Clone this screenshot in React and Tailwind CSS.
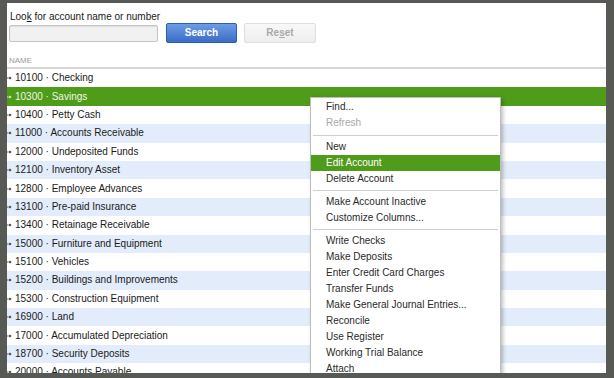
const accounts = [
    '10100 · Checking',
    '10300 · Savings',
    '10400 · Petty Cash',
    '11000 · Accounts Receivable',
    '12000 · Undeposited Funds',
    '12100 · Inventory Asset',
    '12800 · Employee Advances',
    '13100 · Pre-paid Insurance',
    '13400 · Retainage Receivable',
    '15000 · Furniture and Equipment',
    '15100 · Vehicles',
    '15200 · Buildings and Improvements',
    '15300 · Construction Equipment',
    '16900 · Land',
    '17000 · Accumulated Depreciation',
    '18700 · Security Deposits',
    '20000 · Accounts Payable',
];

const menu = [
    { label: 'Find...' },
    { label: 'Refresh', disabled: true },
    { sep: 'h-[8px]' },
    { label: 'New' },
    { label: 'Edit Account', active: true },
    { label: 'Delete Account' },
    { sep: 'h-[7px]' },
    { label: 'Make Account Inactive' },
    { label: 'Customize Columns...' },
    { sep: 'h-[7px]' },
    { label: 'Write Checks' },
    { label: 'Make Deposits' },
    { label: 'Enter Credit Card Charges' },
    { label: 'Transfer Funds' },
    { label: 'Make General Journal Entries...' },
    { label: 'Reconcile' },
    { label: 'Use Register' },
    { label: 'Working Trial Balance' },
    { label: 'Attach' },
];

function Bullet({ light }) {
    return (
        <svg width="6" height="6" viewBox="0 0 6 6" className="shrink-0">
            <path d="M0 3h1.5" stroke={light ? '#dfeed3' : '#666'} strokeWidth="1" />
            <path d="M3 1.5L4.5 3 3 4.5 1.5 3z" fill={light ? '#dfeed3' : '#444'} />
        </svg>
    );
}

function AccountRow({ text, index }) {
    const selected = index === 1;
    const bg = selected ? 'bg-[#4f9b1a] text-[#eef7e8]' : index % 2 === 1 ? 'bg-[#e2ecfb] text-[#1a1a1a]' : 'bg-white text-[#1a1a1a]';
    return (
        <div className={`h-[18.4px] flex items-center shrink-0 ${bg}`}>
            <Bullet light={selected} />
            <span className="ml-[2px] leading-[12px]">{text}</span>
        </div>
    );
}

function ContextMenu() {
    return (
        <div className="absolute left-[303px] top-[94px] w-[191px] bg-white border border-[#bdbdbd] shadow-[2px_2px_4px_rgba(0,0,0,0.25)] pt-[1px] pb-[4px] text-[#2a2a2a]">
            {menu.map((item, i) =>
                item.sep ? (
                    <div key={i} className={`${item.sep} flex items-center px-[2px]`}>
                        <div className="h-px w-full bg-[#cfcfcf]" />
                    </div>
                ) : (
                    <div
                        key={i}
                        className={`h-[16px] flex items-center pl-[15px] leading-[12px] ${item.active ? 'bg-[#4f9b1a] text-white' : ''} ${item.disabled ? 'text-[#a8a8a8]' : ''}`}
                    >
                        {item.label}
                    </div>
                )
            )}
        </div>
    );
}

export default function App() {
    return (
        <div className="w-[614px] h-[378px] bg-[#575a54] pt-[3px] pl-[7px] pr-[8px] pb-[5px] font-['Liberation_Sans',Arial,sans-serif] text-[10px]">
            <div className="relative w-[599px] h-[370px] bg-white overflow-hidden flex flex-col">
                <div className="pt-[7px] pl-[2px]">
                    <div className="pl-[1px] leading-[13px] text-[#1a1a1a]">
                        Loo<span className="underline">k</span> for account name or number
                    </div>
                    <div className="flex items-center h-[20px] gap-[8px]">
                        <div className="w-[149px] h-[17px] rounded-[2px] border border-[#c4c4c4] bg-[#f1f1f1] shadow-[inset_0_1px_1px_rgba(0,0,0,0.08)]" />
                        <button className="w-[71px] h-[20px] rounded-[2px] border border-[#2d5ea9] bg-gradient-to-b from-[#6d9de6] to-[#3b6cc6] text-white font-bold leading-[12px]">
                            Search
                        </button>
                        <button className="ml-[-1px] w-[72px] h-[20px] rounded-[2px] border border-[#dedede] bg-gradient-to-b from-[#f8f8f8] to-[#eeeeee] text-[#a9a9a9] font-bold leading-[12px]">
                            Re<span className="underline">s</span>et
                        </button>
                    </div>
                </div>
                <div className="h-[26px] shrink-0 flex items-end pl-[2px] pb-[1px] border-b-2 border-[#d6d6d6] text-[8px] leading-[10px] text-[#9a9a9a]">
                    NAME
                </div>
                <div className="flex flex-col">
                    {accounts.map((a, i) => (
                        <AccountRow key={a} text={a} index={i} />
                    ))}
                </div>
                <ContextMenu />
            </div>
        </div>
    );
}
